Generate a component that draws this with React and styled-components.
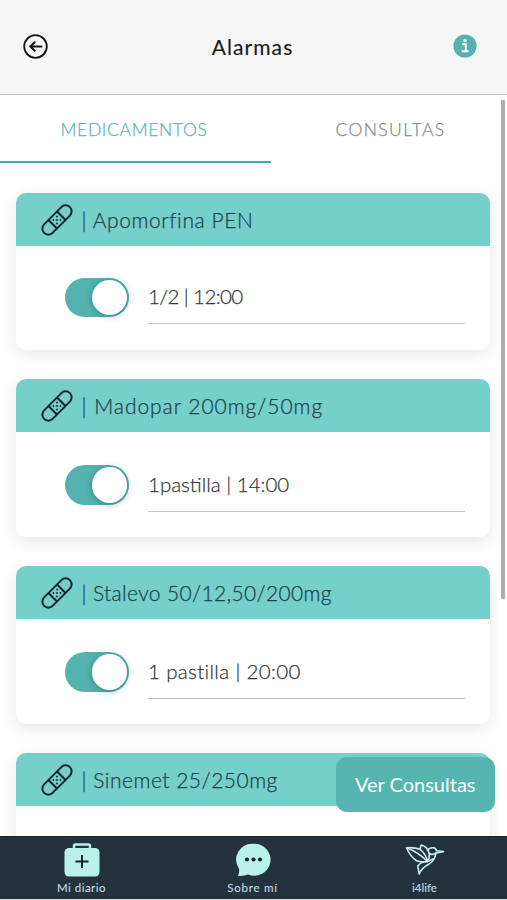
import React from "react";
import styled, { createGlobalStyle } from "styled-components";

const Teal = "#54b3af";
const LightTeal = "#75cfca";
const Mint = "#b9f1eb";
const Navy = "#24323e";

const GlobalStyle = createGlobalStyle`
  * {
    box-sizing: border-box;
  }
  body {
    margin: 0;
    background-color: #ffffff;
    font-family: Lato, "Open Sans", sans-serif;
  }
`;

const Screen = styled.div`
  position: relative;
  display: flex;
  flex-direction: column;
  width: 507px;
  height: 900px;
  overflow: hidden;
  background-color: #ffffff;
`;

const Header = styled.header`
  display: flex;
  flex-shrink: 0;
  align-items: center;
  justify-content: space-between;
  height: 95px;
  padding: 0 30px 2px 23px;
  background-color: #f6f6f6;
  border-bottom: 1.5px solid #c4c4c4;
`;

const HeaderTitle = styled.h1`
  margin: 1px 0 0 4px;
  font-size: 21px;
  font-weight: 400;
  line-height: 26px;
  letter-spacing: ${({ $spacing }) => $spacing};
  color: #1c1c1c;
  -webkit-text-stroke: 0.15px #1c1c1c;
`;

const IconButton = styled.button`
  display: flex;
  padding: 0;
  border: 0;
  background: none;
`;

const Content = styled.main`
  flex: 1;
  min-height: 0;
  overflow: hidden;
`;

const Tabs = styled.div`
  display: grid;
  grid-template-columns: 271px 236px;
  height: 68px;
`;

const Tab = styled.div`
  display: flex;
  align-items: center;
  justify-content: center;
  padding: ${({ $active }) => ($active ? "3px 3px 0 0" : "1px 0 0 3px")};
  font-size: 17.5px;
  font-weight: 300;
  letter-spacing: ${({ $spacing }) => $spacing};
  color: ${({ $active }) => ($active ? "#58b5ad" : "#8a8a8a")};
  -webkit-text-stroke: 0.25px currentColor;
  border-bottom: ${({ $active }) => ($active ? "2.5px solid #43a9a5" : "0")};
`;

const CardList = styled.div`
  display: flex;
  flex-direction: column;
  gap: 29.5px;
  padding: 30px 17px 0 16px;
`;

const Card = styled.section`
  flex-shrink: 0;
  height: ${({ $height }) => $height || "157.5px"};
  border-radius: 10px;
  background-color: #ffffff;
  box-shadow: 0 4px 16px rgba(0, 0, 0, 0.1);
`;

const CardHeader = styled.div`
  display: flex;
  align-items: center;
  height: 53.3px;
  padding-left: 24.5px;
  border-radius: 10px 10px 0 0;
  background-color: ${LightTeal};
`;

const CardTitle = styled.h2`
  margin: 0 0 0 9px;
  font-size: 21px;
  font-weight: 300;
  letter-spacing: ${({ $spacing }) => $spacing};
  white-space: nowrap;
  color: #1f414a;
  -webkit-text-stroke: 0.25px #1f414a;
`;

const CardBody = styled.div`
  display: flex;
  align-items: flex-start;
  gap: 19px;
  padding: ${({ $top }) => $top || "33.2px"} 25px 0 49px;
`;

const Toggle = styled.div`
  flex-shrink: 0;
  display: flex;
  justify-content: flex-end;
  width: 64px;
  height: 39.5px;
  padding: 2px;
  border-radius: 20px;
  background-color: ${Teal};
`;

const ToggleKnob = styled.div`
  width: 35.5px;
  height: 35.5px;
  border-radius: 50%;
  background-color: #ffffff;
  box-shadow: 0 1px 6px rgba(0, 60, 60, 0.4);
`;

const Dose = styled.div`
  flex: 1;
  height: 46.5px;
  padding-top: 5.5px;
  font-size: 20.5px;
  font-weight: 300;
  line-height: 26px;
  letter-spacing: ${({ $spacing }) => $spacing};
  color: #383838;
  -webkit-text-stroke: 0.25px #383838;
  border-bottom: 1.5px solid #c8c8c8;
`;

const ScrollThumb = styled.div`
  position: absolute;
  top: 100px;
  right: 2.5px;
  width: 3.5px;
  height: 499px;
  border-radius: 1px;
  background-color: #adadad;
`;

const FloatingButton = styled.button`
  position: absolute;
  right: 12.5px;
  bottom: 88px;
  width: 158.5px;
  height: 55px;
  padding: 0 0 2px;
  border: 0;
  border-radius: 11px;
  background-color: #56b5b1;
  font-family: inherit;
  font-size: 20px;
  letter-spacing: ${({ $spacing }) => $spacing};
  color: #ffffff;
`;

const BottomNav = styled.nav`
  flex-shrink: 0;
  display: grid;
  grid-template-columns: 163px 179px 165px;
  height: 64px;
  background-color: ${Navy};
  border-top: 1px solid #17222c;
  border-bottom: 1px solid #dfe3e5;
`;

const NavItem = styled.div`
  display: flex;
  flex-direction: column;
  align-items: center;
  padding-top: 6px;
`;

const NavLabel = styled.span`
  margin-top: 3px;
  font-size: 11.5px;
  line-height: 16px;
  letter-spacing: ${({ $spacing }) => $spacing};
  color: #c5dfe2;
  -webkit-text-stroke: 0.1px #c5dfe2;
`;

const BackIcon = () => (
  <svg width="25" height="25" viewBox="0 0 25 25" fill="none" stroke="#151515">
    <circle cx="12.5" cy="12.5" r="11.3" strokeWidth="1.8" />
    <path
      d="M18.4 12.5H7.6M11.7 8.2L7.2 12.5L11.7 16.8"
      strokeWidth="2"
      strokeLinecap="round"
      strokeLinejoin="round"
    />
  </svg>
);

const InfoIcon = () => (
  <svg width="24" height="24" viewBox="0 0 24 24">
    <circle cx="12" cy="12" r="11.6" fill={Teal} />
    <circle cx="12" cy="6.5" r="1.7" fill="#fff" />
    <path d="M9.2 10.2H12.8V17.1M8.7 17.2H15.5" fill="none" stroke="#fff" strokeWidth="2" />
  </svg>
);

const BandageIcon = () => (
  <svg width="32" height="32" viewBox="0 0 32 32" fill="none" stroke="#10252b">
    <g transform="rotate(-45 16 16)" strokeWidth="2">
      <rect x="-2.2" y="10" width="36.4" height="12" rx="6" />
      <path d="M10 10V22M22 10V22" />
    </g>
    <g fill="#10252b" stroke="none">
      <circle cx="16" cy="12.5" r="0.9" />
      <circle cx="19.5" cy="16" r="0.9" />
      <circle cx="16" cy="16" r="0.9" />
      <circle cx="12.5" cy="16" r="0.9" />
      <circle cx="16" cy="19.5" r="0.9" />
    </g>
  </svg>
);

const MedkitIcon = () => (
  <svg width="36" height="34" viewBox="0 0 36 34">
    <path d="M10 6V3Q10 1.5 11.5 1.5H24.5Q26 1.5 26 3V6" fill="none" stroke={Mint} strokeWidth="2.5" />
    <rect x="0.5" y="5" width="35" height="28.5" rx="4.5" fill={Mint} />
    <path d="M18 12V25M11.5 18.5H24.5" stroke="#17252f" strokeWidth="2" />
  </svg>
);

const ChatIcon = () => (
  <svg width="36" height="34" viewBox="0 0 36 34">
    <path
      d="M18.7 0.8A16.2 16 0 1 1 13.2 31.6Q7.7 33.4 3 32.8Q4.7 29.5 4 25.7A16 16 0 0 1 18.7 0.8Z"
      fill={Mint}
    />
    <circle cx="12" cy="16.5" r="2.1" fill="#17252f" />
    <circle cx="18.5" cy="16.5" r="2.1" fill="#17252f" />
    <circle cx="25" cy="16.5" r="2.1" fill="#17252f" />
  </svg>
);

const BirdIcon = () => (
  <svg
    width="40"
    height="34"
    viewBox="0 0 40 34"
    fill="none"
    stroke="#c9edee"
    strokeWidth="1.6"
    strokeLinejoin="round"
    strokeLinecap="round"
  >
    <path d="M1.5 4.8Q9 4 14.8 6.2Q21 11 22.5 18.5Q16 19.5 11.5 17.8Q5.5 14 1.5 4.8Z" />
    <path d="M2 5Q13 9 22.5 18.5" />
    <path d="M14.8 6.2L16.2 2Q22.5 3.5 24.2 10.5Q25 15 22.5 18.5" />
    <path d="M22.5 7.5Q24.5 4.5 28 4.8Q31 5 31.5 7.8L38.5 8.6L31 10Q30 17.5 24 21Q16.5 25 14.2 31L12.8 23Q16 18.5 22.5 18.5" />
    <path d="M24.2 10.5Q27.5 12.5 31 10M22.5 18.5L28.5 15.8" />
  </svg>
);

const alarms = [
  { name: "Apomorfina PEN", dose: "1/2 | 12:00", nameSpacing: "0.6px", doseSpacing: "-0.6px", height: "156.5px", top: "31.7px" },
  { name: "Madopar 200mg/50mg", dose: "1pastilla | 14:00", nameSpacing: "0.95px", doseSpacing: "0px" },
  { name: "Stalevo 50/12,50/200mg", dose: "1 pastilla | 20:00", nameSpacing: "0.35px", doseSpacing: "0.35px" },
  { name: "Sinemet 25/250mg", nameSpacing: "0.5px" },
];

const navItems = [
  { label: "Mi diario", Icon: MedkitIcon, spacing: "0.5px" },
  { label: "Sobre mí", Icon: ChatIcon, spacing: "0.8px" },
  { label: "i4life", Icon: BirdIcon, spacing: "0px" },
];

const AlarmCard = ({ alarm }) => (
  <Card $height={alarm.height}>
    <CardHeader>
      <BandageIcon />
      <CardTitle $spacing={alarm.nameSpacing}>| {alarm.name}</CardTitle>
    </CardHeader>
    {alarm.dose && (
      <CardBody $top={alarm.top}>
        <Toggle>
          <ToggleKnob />
        </Toggle>
        <Dose $spacing={alarm.doseSpacing}>{alarm.dose}</Dose>
      </CardBody>
    )}
  </Card>
);

export default () => (
  <>
    <GlobalStyle />
    <Screen>
      <Header>
        <IconButton aria-label="Volver">
          <BackIcon />
        </IconButton>
        <HeaderTitle $spacing="1.1px">Alarmas</HeaderTitle>
        <IconButton aria-label="Información">
          <InfoIcon />
        </IconButton>
      </Header>
      <Content>
        <Tabs>
          <Tab $active $spacing="0.65px">MEDICAMENTOS</Tab>
          <Tab $spacing="1.4px">CONSULTAS</Tab>
        </Tabs>
        <CardList>
          {alarms.map((alarm) => (
            <AlarmCard key={alarm.name} alarm={alarm} />
          ))}
        </CardList>
      </Content>
      <BottomNav>
        {navItems.map(({ label, Icon, spacing }) => (
          <NavItem key={label}>
            <Icon />
            <NavLabel $spacing={spacing}>{label}</NavLabel>
          </NavItem>
        ))}
      </BottomNav>
      <ScrollThumb />
      <FloatingButton $spacing="0px">Ver Consultas</FloatingButton>
    </Screen>
  </>
);
